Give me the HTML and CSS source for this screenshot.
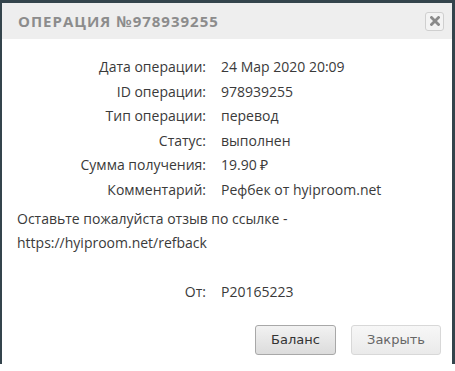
FILE: index.html
```html
<!DOCTYPE html>
<html lang="ru">
<head>
    <meta charset="UTF-8">
    <title>Операция</title>
    <link rel="stylesheet" href="styles.css">
</head>
<body>
    <div class="dialog">
        <div class="dialog-header">
            <span class="dialog-title">Операция №978939255</span>
            <button class="close-x" type="button">
                <svg width="10" height="10" viewBox="0 0 10 10"><path d="M1.5 1.5 L8.5 8.5 M8.5 1.5 L1.5 8.5" stroke="#8a8a8a" stroke-width="2.8" stroke-linecap="square"/></svg>
            </button>
        </div>
        <div class="dialog-body">
            <div class="info">
                <span class="label">Дата операции:</span><span class="value">24 Мар 2020 20:09</span>
                <span class="label">ID операции:</span><span class="value">978939255</span>
                <span class="label">Тип операции:</span><span class="value">перевод</span>
                <span class="label">Статус:</span><span class="value">выполнен</span>
                <span class="label">Сумма получения:</span><span class="value">19.90 ₽</span>
                <span class="label">Комментарий:</span><span class="value">Рефбек от hyiproom.net</span>
            </div>
            <p class="comment">Оставьте пожалуйста отзыв по ссылке -<br>https://hyiproom.net/refback</p>
            <div class="info from">
                <span class="label">От:</span><span class="value">P20165223</span>
            </div>
        </div>
        <div class="dialog-footer">
            <button class="btn" type="button">Баланс</button>
            <button class="btn btn-light" type="button">Закрыть</button>
        </div>
    </div>
</body>
</html>
```

FILE: styles.css
```css
body {
    margin: 0;
    background-color: #fff;
    font-family: "Open Sans", sans-serif;
}

.dialog {
    background-color: #34444c;
    padding: 3px 3px 0 2px;
}

.dialog-header {
    background-color: #eeeeee;
    height: 36px;
    display: flex;
    align-items: center;
    justify-content: space-between;
    padding: 0 8px 0 16px;
}

.dialog-title {
    font-size: 15px;
    font-weight: bold;
    color: #8c8c8c;
    text-transform: uppercase;
    letter-spacing: 1px;
}

.close-x {
    width: 19px;
    height: 19px;
    padding: 0;
    border: 1px solid #cfcfcf;
    border-radius: 3px;
    background-color: #f3f3f3;
    display: flex;
    align-items: center;
    justify-content: center;
}

.dialog-body {
    background-color: #fff;
    padding: 18px 0 0;
    color: #3a3a3a;
    font-size: 14px;
}

.info {
    display: grid;
    grid-template-columns: 204px 1fr;
    column-gap: 15px;
    row-gap: 4.5px;
    line-height: 20px;
}

.info .label {
    text-align: right;
}

.comment {
    margin: 7px 0 0;
    padding-left: 15px;
    line-height: 24px;
}

.from {
    margin-top: 27px;
}

.dialog-footer {
    background-color: #fff;
    display: flex;
    justify-content: flex-end;
    gap: 15px;
    padding: 23px 11px 9px;
}

.btn {
    font-family: "DejaVu Sans", sans-serif;
    font-size: 13px;
    color: #333;
    width: 81px;
    height: 30px;
    border: 1px solid #a8a8a8;
    border-radius: 3px;
    background: linear-gradient(#f2f2f2, #dcdcdc);
}

.btn-light {
    width: 90px;
    color: #666;
    border-color: #d8d8d8;
    background: linear-gradient(#f7f7f7, #eaeaea);
}
```
